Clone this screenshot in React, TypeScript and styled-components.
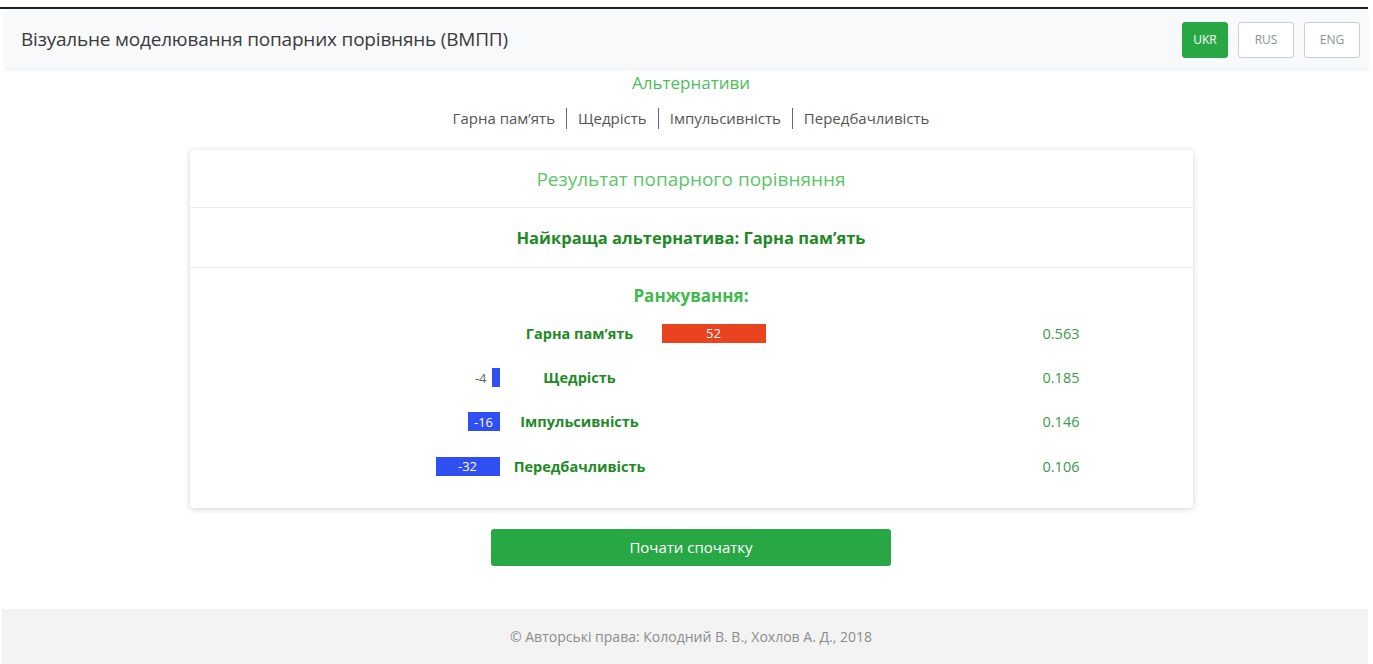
import styled, { createGlobalStyle } from 'styled-components';

const GlobalStyle = createGlobalStyle`
  html, body {
    margin: 0;
    padding: 0;
    background: #ffffff;
    font-family: "Open Sans", "Noto Sans", "DejaVu Sans", sans-serif;
    color: #333;
  }
  * {
    box-sizing: border-box;
  }
`;

const Page = styled.div`
  padding-top: 7px;
  padding-right: 5px;
  min-height: 664px;
  display: flex;
  flex-direction: column;
`;

const TopLine = styled.div`
  height: 2px;
  background: #1f1f1f;
`;

const Navbar = styled.header`
  margin: 0 0 0 4px;
  height: 59px;
  padding: 0 8px 0 17px;
  background: #f8f9fa;
  display: flex;
  align-items: center;
  justify-content: space-between;
  box-shadow: 0 2px 3px rgba(0, 0, 0, 0.06);
`;

const Brand = styled.div`
  font-size: 19px;
  color: #3a3a3a;
  letter-spacing: -0.2px;
`;

const LangGroup = styled.div`
  display: flex;
  gap: 10px;
  margin-top: 2px;
`;

const LangButton = styled.button<{ $active?: boolean }>`
  height: 36px;
  width: ${(p) => (p.$active ? 46 : 56)}px;
  padding: 0;
  border-radius: 3px;
  font-family: inherit;
  font-size: 12px;
  border: 1px solid ${(p) => (p.$active ? '#28a745' : '#c9d3cb')};
  background: ${(p) => (p.$active ? '#28a745' : '#ffffff')};
  color: ${(p) => (p.$active ? '#ffffff' : '#8a948c')};
`;

const Main = styled.main`
  display: flex;
  flex-direction: column;
  align-items: center;
  padding-left: 14px;
`;

const SectionTitle = styled.div`
  margin-top: 4px;
  font-size: 17px;
  color: #4cbf5a;
  line-height: 22px;
`;

const AltList = styled.ul`
  list-style: none;
  margin: 14px 0 0;
  padding: 0;
  display: flex;
  font-size: 15px;
  color: #555;
`;

const AltItem = styled.li`
  padding: 0 11px;
  line-height: 21px;
  & + & {
    border-left: 1px solid #666;
  }
`;

const Card = styled.section`
  margin-top: 21px;
  width: 1003px;
  background: #fff;
  border-radius: 4px;
  box-shadow: 0 1px 6px rgba(0, 0, 0, 0.18);
`;

const CardBlock = styled.div<{ $h: number }>`
  height: ${(p) => p.$h}px;
  display: flex;
  align-items: center;
  justify-content: center;
  & + & {
    border-top: 1px solid #ececec;
  }
`;

const CardTitle = styled.div`
  font-size: 19px;
  color: #5ac668;
`;

const Best = styled.div`
  font-size: 16.5px;
  font-weight: 700;
  color: #1e8a26;
`;

const Ranking = styled.div`
  border-top: 1px solid #ececec;
  padding: 15px 0 19px;
`;

const RankingTitle = styled.div`
  text-align: center;
  font-size: 17px;
  font-weight: 700;
  color: #3fba4c;
  line-height: 26px;
  margin-bottom: 2px;
`;

const RankRow = styled.div`
  display: grid;
  grid-template-columns: 322px 136px 395px 1fr;
  align-items: center;
  height: 44.4px;
`;

const NegCell = styled.div`
  display: flex;
  justify-content: flex-end;
  align-items: center;
  gap: 5px;
  padding-right: 12px;
  font-size: 13px;
  color: #666;
`;

const PosCell = styled.div`
  display: flex;
  align-items: center;
  padding-left: 14px;
`;

const Name = styled.div`
  text-align: center;
  white-space: nowrap;
  font-size: 14.5px;
  font-weight: 700;
  color: #1e8a26;
`;

const Bar = styled.div<{ $neg?: boolean }>`
  height: 19px;
  background: ${(p) => (p.$neg ? '#2f4ff3' : '#e9441f')};
  color: #fff;
  font-size: 13px;
  display: flex;
  align-items: center;
  justify-content: center;
  overflow: hidden;
`;

const Value = styled.div`
  font-size: 14.5px;
  color: #3c9a44;
`;

const ResetButton = styled.button`
  margin-top: 21px;
  width: 400px;
  height: 37px;
  border: none;
  border-radius: 3px;
  background: #28a745;
  color: #fff;
  font-family: inherit;
  font-size: 15px;
`;

const Footer = styled.footer`
  margin: 43px 0 0 2px;
  height: 56px;
  background: #f3f3f3;
  display: flex;
  align-items: center;
  justify-content: center;
  padding-left: 12px;
  font-size: 14px;
  color: #8c8c8c;
`;

const alternatives = ['Гарна пам\u2019ять', 'Щедрість', 'Імпульсивність', 'Передбачливість'];

const ranking = [
  { name: 'Гарна пам\u2019ять', score: 52, weight: '0.563' },
  { name: 'Щедрість', score: -4, weight: '0.185' },
  { name: 'Імпульсивність', score: -16, weight: '0.146' },
  { name: 'Передбачливість', score: -32, weight: '0.106' },
];

const UNIT = 2;

function RankLine({ name, score, weight }: { name: string; score: number; weight: string }) {
  const width = Math.abs(score) * UNIT;
  const fits = width >= 24;
  return (
    <RankRow>
      <NegCell>
        {score < 0 && !fits && <span>{score}</span>}
        {score < 0 && (
          <Bar $neg style={{ width }}>
            {fits ? score : ''}
          </Bar>
        )}
      </NegCell>
      <Name>{name}</Name>
      <PosCell>{score > 0 && <Bar style={{ width }}>{score}</Bar>}</PosCell>
      <Value>{weight}</Value>
    </RankRow>
  );
}

export default function App() {
  return (
    <>
      <GlobalStyle />
      <Page>
        <TopLine />
        <Navbar>
          <Brand>Візуальне моделювання попарних порівнянь (ВМПП)</Brand>
          <LangGroup>
            <LangButton $active>UKR</LangButton>
            <LangButton>RUS</LangButton>
            <LangButton>ENG</LangButton>
          </LangGroup>
        </Navbar>
        <Main>
          <SectionTitle>Альтернативи</SectionTitle>
          <AltList>
            {alternatives.map((a) => (
              <AltItem key={a}>{a}</AltItem>
            ))}
          </AltList>
          <Card>
            <CardBlock $h={57}>
              <CardTitle>Результат попарного порівняння</CardTitle>
            </CardBlock>
            <CardBlock $h={60}>
              <Best>Найкраща альтернатива: Гарна пам&#700;ять</Best>
            </CardBlock>
            <Ranking>
              <RankingTitle>Ранжування:</RankingTitle>
              {ranking.map((r) => (
                <RankLine key={r.name} {...r} />
              ))}
            </Ranking>
          </Card>
          <ResetButton>Почати спочатку</ResetButton>
        </Main>
        <Footer>© Авторські права: Колодний В. В., Хохлов А. Д., 2018</Footer>
      </Page>
    </>
  );
}
